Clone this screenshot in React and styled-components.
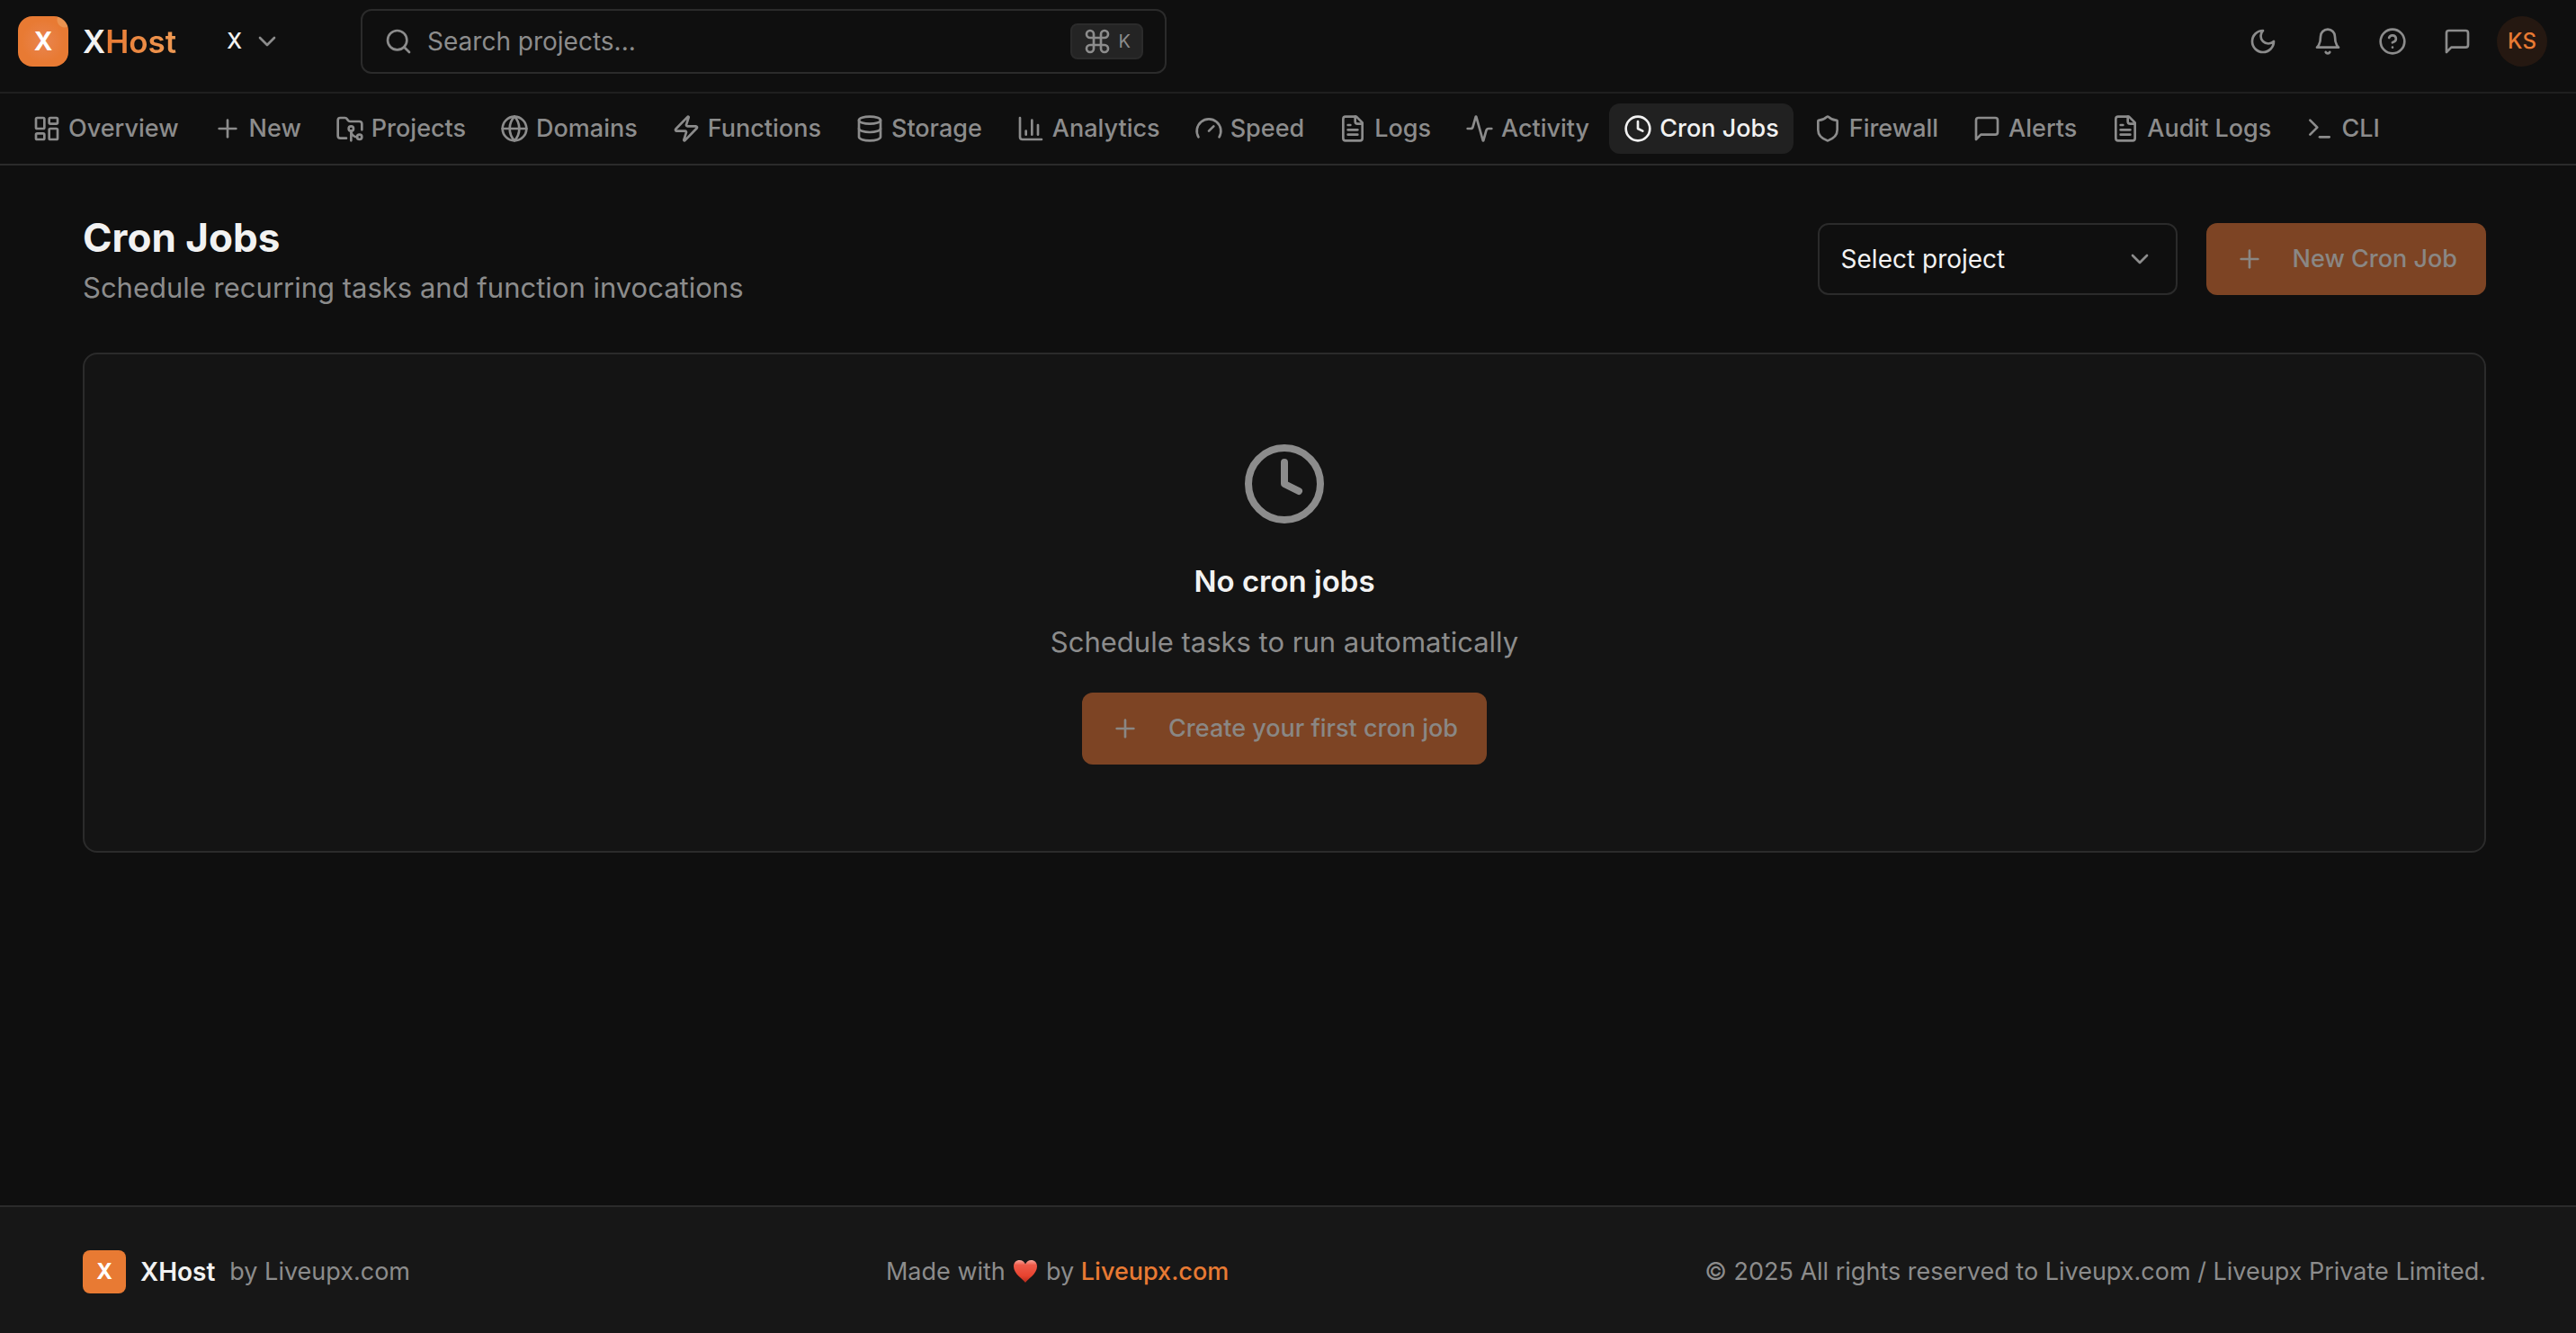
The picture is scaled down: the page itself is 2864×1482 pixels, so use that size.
import React from "react";
import styled, { createGlobalStyle } from "styled-components";
import {
  Activity,
  ChartColumn,
  ChevronDown,
  CircleQuestionMark,
  Clock,
  Command,
  Database,
  FolderGit2,
  Gauge,
  Globe,
  LayoutDashboard,
  Plus,
  Search,
  Shield,
  Terminal,
  Zap,
} from "lucide-react";

const GlobalStyle = createGlobalStyle`
  *, *::before, *::after {
    box-sizing: border-box;
  }
  body {
    margin: 0;
    background: #0f0f0f;
    color: #f2f2f2;
    font-family: Inter, "Liberation Sans", sans-serif;
    font-size: 28px;
    line-height: 40px;
  }
  h1, h2, p {
    margin: 0;
  }
  a {
    color: inherit;
    text-decoration: none;
  }
  button, input, select {
    font: inherit;
    color: inherit;
    margin: 0;
  }
  svg {
    flex: none;
  }
`;

const Outline = ({ size = 32, children }) => (
  <svg
    width={size}
    height={size}
    viewBox="0 0 24 24"
    fill="none"
    stroke="currentColor"
    strokeWidth="2"
    strokeLinecap="round"
    strokeLinejoin="round"
    aria-hidden="true"
  >
    {children}
  </svg>
);

const MoonIcon = () => (
  <Outline>
    <path d="M12 3a6 6 0 0 0 9 9 9 9 0 1 1-9-9Z" />
  </Outline>
);

const BellIcon = () => (
  <Outline>
    <path d="M6 8a6 6 0 0 1 12 0c0 7 3 9 3 9H3s3-2 3-9" />
    <path d="M10.3 21a1.94 1.94 0 0 0 3.4 0" />
  </Outline>
);

const MessageIcon = () => (
  <Outline>
    <path d="M21 15a2 2 0 0 1-2 2H7l-4 4V5a2 2 0 0 1 2-2h14a2 2 0 0 1 2 2z" />
  </Outline>
);

const FileIcon = () => (
  <Outline>
    <path d="M15 2H6a2 2 0 0 0-2 2v16a2 2 0 0 0 2 2h12a2 2 0 0 0 2-2V7Z" />
    <path d="M14 2v4a2 2 0 0 0 2 2h4" />
    <path d="M10 9H8" />
    <path d="M16 13H8" />
    <path d="M16 17H8" />
  </Outline>
);

const HeartIcon = () => (
  <svg width="30" height="28" viewBox="-1 0 30 28" role="img" aria-label="love">
    <defs>
      <linearGradient id="heart" x1="0" y1="0" x2="0" y2="1">
        <stop offset="0" stopColor="#f9a79c" />
        <stop offset="0.22" stopColor="#ee5a49" />
        <stop offset="0.7" stopColor="#e8432f" />
        <stop offset="1" stopColor="#b52a1c" />
      </linearGradient>
    </defs>
    <path
      d="M14 27C11.5 23 1 17.5 1 9C1 4.500 4 2 7.500 2C10.500 2 13 3.800 14 6.500C15 3.800 17.500 2 20.500 2C24 2 27 4.500 27 9C27 17.500 16.500 23 14 27Z"
      fill="url(#heart)"
    />
  </svg>
);

const tabs = [
  { label: "Overview", Icon: LayoutDashboard },
  { label: "New", Icon: Plus },
  { label: "Projects", Icon: FolderGit2 },
  { label: "Domains", Icon: Globe },
  { label: "Functions", Icon: Zap },
  { label: "Storage", Icon: Database },
  { label: "Analytics", Icon: ChartColumn },
  { label: "Speed", Icon: Gauge },
  { label: "Logs", Icon: FileIcon },
  { label: "Activity", Icon: Activity },
  { label: "Cron Jobs", Icon: Clock },
  { label: "Firewall", Icon: Shield },
  { label: "Alerts", Icon: MessageIcon },
  { label: "Audit Logs", Icon: FileIcon },
  { label: "CLI", Icon: Terminal },
];

const actions = [
  { label: "Toggle theme", Icon: MoonIcon },
  { label: "Notifications", Icon: BellIcon },
  { label: "Help", Icon: () => <CircleQuestionMark size={32} /> },
  { label: "Feedback", Icon: MessageIcon },
];

const App = () => (
  <Page>
    <GlobalStyle />
    <Header>
      <Brand href="#">
        <BrandMark>X</BrandMark>
        <BrandName>
          X<span>Host</span>
        </BrandName>
      </Brand>
      <TeamButton type="button">
        X
        <ChevronDown size={32} />
      </TeamButton>
      <SearchBox>
        <Search size={32} />
        <input
          type="text"
          placeholder="Search projects..."
          aria-label="Search projects"
        />
        <Shortcut>
          <Command size={32} />K
        </Shortcut>
      </SearchBox>
      <Actions>
        {actions.map(({ label, Icon }) => (
          <IconButton key={label} type="button" aria-label={label}>
            <Icon />
          </IconButton>
        ))}
        <Avatar type="button" aria-label="Account">
          KS
        </Avatar>
      </Actions>
    </Header>
    <Nav>
      {tabs.map(({ label, Icon }) => (
        <Tab key={label} href="#" $active={label === "Cron Jobs"}>
          <Icon size={32} />
          {label}
        </Tab>
      ))}
    </Nav>
    <Main>
      <PageHead>
        <div>
          <Title>Cron Jobs</Title>
          <Muted>Schedule recurring tasks and function invocations</Muted>
        </div>
        <Controls>
          <SelectBox>
            <select aria-label="Project" defaultValue="">
              <option value="">Select project</option>
            </select>
            <ChevronDown size={32} />
          </SelectBox>
          <PrimaryButton type="button" disabled>
            <Plus size={32} />
            New Cron Job
          </PrimaryButton>
        </Controls>
      </PageHead>
      <EmptyCard>
        <Clock size={96} />
        <EmptyTitle>No cron jobs</EmptyTitle>
        <Muted>Schedule tasks to run automatically</Muted>
        <PrimaryButton type="button" disabled>
          <Plus size={32} />
          Create your first cron job
        </PrimaryButton>
      </EmptyCard>
    </Main>
    <Footer>
      <FooterGroup>
        <FooterMark>X</FooterMark>
        <strong>XHost</strong>
        <span>by Liveupx.com</span>
      </FooterGroup>
      <Credit>
        Made with <HeartIcon /> by <a href="#">Liveupx.com</a>
      </Credit>
      <p>
        © 2025 All rights reserved to Liveupx.com / Liveupx Private Limited.
      </p>
    </Footer>
  </Page>
);

const Page = styled.div`
  min-height: 100vh;
  display: flex;
  flex-direction: column;
`;

const Header = styled.header`
  display: flex;
  align-items: center;
  padding: 10px 32px 20px 20px;
  border-bottom: 2px solid #1f1f1f;
`;

const Brand = styled.a`
  display: flex;
  align-items: center;
  gap: 16px;
`;

const BrandMark = styled.span`
  width: 56px;
  height: 56px;
  display: flex;
  align-items: center;
  justify-content: center;
  border-radius: 16px;
  background: radial-gradient(circle at 52px 4px, #eb9350 8px, transparent 9px),
    radial-gradient(circle, #e98550, #e87a33 60%);
  color: #ffffff;
  font-weight: 700;
`;

const BrandName = styled.span`
  font-size: 35px;
  font-weight: 600;

  span {
    background: linear-gradient(90deg, #e87a33, #ef9a54);
    background-clip: text;
    color: transparent;
  }
`;

const TeamButton = styled.button`
  display: flex;
  align-items: center;
  gap: 12px;
  margin: 0 64px 0 32px;
  padding: 0 24px;
  border: 0;
  background: none;
  font-size: 24px;
  font-weight: 500;

  svg {
    color: #8c8c8c;
  }
`;

const SearchBox = styled.label`
  flex: 0 1 896px;
  height: 72px;
  display: flex;
  align-items: center;
  gap: 16px;
  padding: 0 24px;
  border: 2px solid #2b2b2b;
  border-radius: 12px;
  color: #8c8c8c;

  input {
    flex: 1;
    min-width: 0;
    padding: 0;
    border: 0;
    outline: 0;
    background: none;
  }
  input::placeholder {
    color: #8c8c8c;
    opacity: 1;
  }
`;

const Shortcut = styled.kbd`
  height: 40px;
  display: flex;
  align-items: center;
  gap: 8px;
  padding: 0 12px;
  border: 2px solid #2b2b2b;
  border-radius: 8px;
  background: #242424;
  font-family: inherit;
  font-size: 20px;
`;

const Actions = styled.div`
  display: flex;
  gap: 16px;
  margin-left: auto;
`;

const IconButton = styled.button`
  width: 56px;
  height: 56px;
  display: flex;
  align-items: center;
  justify-content: center;
  padding: 0;
  border: 0;
  border-radius: 12px;
  background: none;
  color: #8c8c8c;
`;

const Avatar = styled(IconButton)`
  border-radius: 50%;
  background: #251811;
  color: #e87a33;
  font-size: 24px;
  font-weight: 500;
`;

const Nav = styled.nav`
  display: flex;
  gap: 6px;
  padding: 11px 20px;
  border-bottom: 2px solid #2b2b2b;
`;

const Tab = styled.a`
  display: flex;
  align-items: center;
  gap: 8px;
  padding: 8px 16px;
  border-radius: 12px;
  background: ${props => (props.$active ? "#212121" : "none")};
  color: ${props => (props.$active ? "#f2f2f2" : "#8c8c8c")};
  font-size: 27px;
  font-weight: 500;
  white-space: nowrap;
`;

const Main = styled.main`
  flex: 1;
  padding: 48px 100px 48px 92px;
`;

const PageHead = styled.div`
  display: flex;
  align-items: center;
  justify-content: space-between;
  margin-bottom: 48px;
`;

const Title = styled.h1`
  font-size: 44px;
  font-weight: 700;
  line-height: 64px;
`;

const Muted = styled.p`
  color: #8c8c8c;
  font-size: 31px;
  line-height: 48px;
`;

const Controls = styled.div`
  display: flex;
  gap: 32px;
`;

const SelectBox = styled.div`
  display: grid;
  grid-template-columns: 400px;
  align-items: center;

  select,
  svg {
    grid-area: 1 / 1;
  }
  select {
    height: 80px;
    padding: 0 64px 0 24px;
    appearance: none;
    border: 2px solid #2b2b2b;
    border-radius: 12px;
    background: #0f0f0f;
  }
  svg {
    justify-self: end;
    margin-right: 26px;
    color: #8c8c8c;
    pointer-events: none;
  }
`;

const PrimaryButton = styled.button`
  height: 80px;
  display: flex;
  align-items: center;
  gap: 32px;
  padding: 0 32px;
  border: 0;
  border-radius: 12px;
  background: #7d4424;
  color: #8a8784;
  font-size: 27px;
  font-weight: 500;
`;

const EmptyCard = styled.section`
  display: flex;
  flex-direction: column;
  align-items: center;
  padding: 96px;
  border: 2px solid #2b2b2b;
  border-radius: 16px;
  background: #141414;

  > svg {
    margin-bottom: 32px;
    color: #8c8c8c;
  }
  ${Muted} {
    margin-bottom: 32px;
  }
`;

const EmptyTitle = styled.h2`
  margin-bottom: 16px;
  font-size: 33px;
  font-weight: 600;
  line-height: 56px;
`;

const Footer = styled.footer`
  display: flex;
  align-items: center;
  justify-content: space-between;
  padding: 48px 100px 44px 92px;
  border-top: 2px solid #2b2b2b;
  background: #171717;
  color: #8c8c8c;
  font-size: 27px;
`;

const FooterGroup = styled.div`
  display: flex;
  align-items: center;
  gap: 16px;

  strong {
    color: #f2f2f2;
    font-size: 28px;
    font-weight: 600;
  }
`;

const FooterMark = styled.span`
  width: 48px;
  height: 48px;
  display: flex;
  align-items: center;
  justify-content: center;
  border-radius: 8px;
  background: #e87a33;
  color: #ffffff;
  font-size: 24px;
  font-weight: 700;
`;

const Credit = styled.p`
  svg {
    vertical-align: -4px;
  }
  a {
    color: #e87a33;
    font-weight: 500;
  }
`;

export default App;
